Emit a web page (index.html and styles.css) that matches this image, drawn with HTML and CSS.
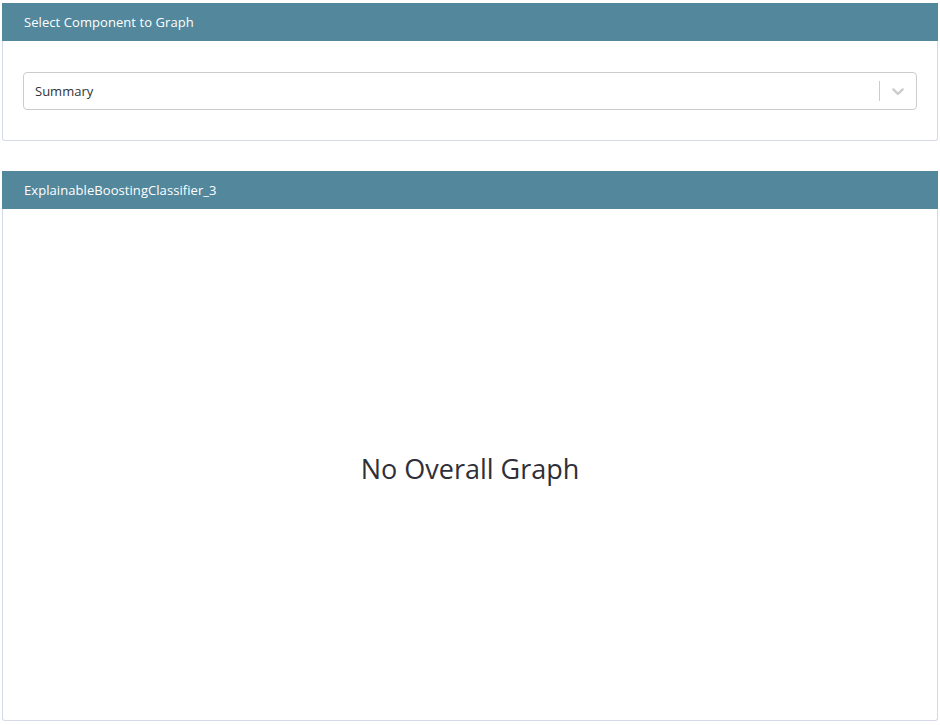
FILE: index.html
```html
<!DOCTYPE html>
<html>
<head>
<meta charset="utf-8">
<link rel="stylesheet" href="styles.css">
</head>
<body>
<div class="page">
  <section class="card">
    <div class="card-header">Select Component to Graph</div>
    <div class="card-body select-body">
      <div class="select">
        <span class="select-value">Summary</span>
        <span class="select-sep"></span>
        <span class="select-arrow">
          <svg width="20" height="20" viewBox="0 0 20 20"><path d="M4.516 7.548c0.436-0.446 1.043-0.481 1.576 0l3.908 3.747 3.908-3.747c0.533-0.481 1.141-0.446 1.574 0 0.436 0.445 0.408 1.197 0 1.615-0.406 0.418-4.695 4.502-4.695 4.502-0.217 0.223-0.502 0.335-0.787 0.335s-0.57-0.112-0.789-0.335c0 0-4.287-4.084-4.695-4.502s-0.436-1.170 0-1.615z" fill="#cccccc"/></svg>
        </span>
      </div>
    </div>
  </section>
  <section class="card graph-card">
    <div class="card-header">ExplainableBoostingClassifier_3</div>
    <div class="card-body graph-body">
      <div class="empty">No Overall Graph</div>
    </div>
  </section>
</div>
</body>
</html>
```
FILE: styles.css
```css
html, body {
  margin: 0;
  padding: 0;
  background: #ffffff;
}
body {
  font-family: "Open Sans", "Noto Sans", sans-serif;
  color: #333333;
}
.page {
  padding: 3px 2px 4px 2px;
  display: flex;
  flex-direction: column;
  gap: 30px;
}
.card {
  border: 1px solid #d6dae8;
  border-top: none;
  border-radius: 0 0 3px 3px;
  background: #fff;
  display: flex;
  flex-direction: column;
}
.card-header {
  background: #52879c;
  color: #ffffff;
  font-size: 13px;
  letter-spacing: 0.07px;
  height: 38px;
  line-height: 38px;
  padding-left: 22px;
  margin: 0 -1px;
}
.select-body {
  padding: 31px 20px 30px 20px;
}
.select {
  height: 36px;
  border: 1px solid #cccccc;
  border-radius: 4px;
  display: flex;
  align-items: center;
  font-size: 13px;
  color: #333333;
}
.select-value {
  flex: 1;
  padding-left: 11px;
}
.select-sep {
  width: 1px;
  height: 20px;
  background: #cccccc;
}
.select-arrow {
  width: 36px;
  display: flex;
  justify-content: center;
  align-items: center;
}
.graph-card {
  height: 549px;
}
.graph-body {
  flex: 1;
  display: flex;
  align-items: center;
  justify-content: center;
}
.empty {
  font-size: 27px;
  color: #2f2f38;
  margin-top: 8px;
}
```
